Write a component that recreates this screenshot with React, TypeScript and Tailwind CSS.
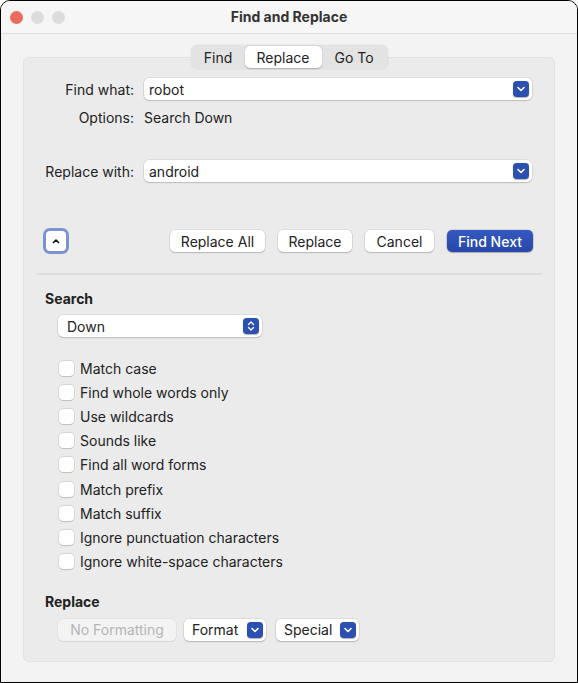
import React from "react";

const font = { fontFamily: "Inter, 'Liberation Sans', sans-serif" };

function BlueChevron() {
  return (
    <div className="w-[16px] h-[16px] rounded-[4px] bg-[#2c4fb2] flex items-center justify-center shadow-[0_0.5px_1px_rgba(0,0,0,0.3)]">
      <svg width="8" height="6" viewBox="0 0 8 6" fill="none">
        <path d="M1 1.5 L4 4.5 L7 1.5" stroke="white" strokeWidth="1.6" strokeLinecap="round" strokeLinejoin="round" />
      </svg>
    </div>
  );
}

function Stepper() {
  return (
    <div className="w-[16px] h-[16px] rounded-[4px] bg-[#2c4fb2] flex items-center justify-center shadow-[0_0.5px_1px_rgba(0,0,0,0.3)]">
      <svg width="8" height="12" viewBox="0 0 8 12" fill="none">
        <path d="M1.5 4.5 L4 2 L6.5 4.5" stroke="white" strokeWidth="1.4" strokeLinecap="round" strokeLinejoin="round" />
        <path d="M1.5 7.5 L4 10 L6.5 7.5" stroke="white" strokeWidth="1.4" strokeLinecap="round" strokeLinejoin="round" />
      </svg>
    </div>
  );
}

function Field({ value }: { value: string }) {
  return (
    <div className="h-[22px] flex-1 bg-white rounded-[5px] shadow-[0_0_0_0.5px_rgba(0,0,0,0.12),0_1px_1.5px_rgba(0,0,0,0.15)] flex items-center pl-[5px] pr-[3px]">
      <span className="flex-1 text-[14px] text-[#222]">{value}</span>
      <BlueChevron />
    </div>
  );
}

function Btn({ children, w }: { children: React.ReactNode; w: string }) {
  return (
    <div className={`${w} h-[22px] bg-white rounded-[5px] shadow-[0_0_0_0.5px_rgba(0,0,0,0.12),0_1px_1.5px_rgba(0,0,0,0.18)] flex items-center justify-center text-[14px] text-[#222]`}>
      {children}
    </div>
  );
}

const options = [
  "Match case",
  "Find whole words only",
  "Use wildcards",
  "Sounds like",
  "Find all word forms",
  "Match prefix",
  "Match suffix",
  "Ignore punctuation characters",
  "Ignore white-space characters",
];

export default function App() {
  return (
    <div style={font} className="w-[578px] h-[683px] border border-black rounded-t-[10px] overflow-hidden bg-[#f3f3f3] flex flex-col text-[#222]">
      {/* Title bar */}
      <div className="h-[33px] shrink-0 bg-[#f6f6f6] border-b border-[#dddddd] grid grid-cols-[1fr_auto_1fr] items-center">
        <div className="flex items-center gap-[8px] pl-[9px]">
          <div className="w-[13px] h-[13px] rounded-full bg-[#ec6a5e]" />
          <div className="w-[13px] h-[13px] rounded-full bg-[#dcdcdc]" />
          <div className="w-[13px] h-[13px] rounded-full bg-[#dcdcdc]" />
        </div>
        <div className="text-[14px] font-bold text-[#333] -mt-[1px]">Find and Replace</div>
        <div />
      </div>

      {/* Content */}
      <div className="flex-1 flex flex-col pt-[11px] pb-[20px] px-[22px]">
        <div className="relative z-10 self-center -mb-[12px] h-[24px] bg-[#e3e3e3] rounded-[6px] p-[1px] flex items-stretch shadow-[0_0_0_0.5px_rgba(0,0,0,0.06)] text-[14px] text-[#222]">
          <div className="w-[53px] flex items-center justify-center">Find</div>
          <div className="w-[77px] flex items-center justify-center bg-white rounded-[5px] shadow-[0_0.5px_1.5px_rgba(0,0,0,0.25)]">Replace</div>
          <div className="w-[65px] flex items-center justify-center">Go To</div>
        </div>

        <div className="flex-1 bg-[#ebebeb] rounded-[6px] border border-[#e2e2e2] flex flex-col pt-[20px] px-[12px]">
          {/* Find what */}
          <div className="flex items-center pr-[10px]">
            <div className="w-[108px] text-right pr-[10px] text-[14px]">Find what:</div>
            <Field value="robot" />
          </div>
          <div className="flex items-center mt-[8px] h-[18px]">
            <div className="w-[108px] text-right pr-[10px] text-[14px]">Options:</div>
            <div className="text-[14px]">Search Down</div>
          </div>
          <div className="flex items-center mt-[34px] pr-[10px]">
            <div className="w-[108px] text-right pr-[10px] text-[14px]">Replace with:</div>
            <Field value="android" />
          </div>

          {/* Buttons row */}
          <div className="flex items-center mt-[46px] pl-[7px] pr-[9px]">
            <div className="w-[26px] h-[26px] rounded-[7px] border-[3px] border-[#7b92d0] bg-white flex items-center justify-center">
              <svg width="8" height="6" viewBox="0 0 8 6" fill="none">
                <path d="M1.5 4.5 L4 2 L6.5 4.5" stroke="#111" strokeWidth="1.6" strokeLinecap="round" strokeLinejoin="round" />
              </svg>
            </div>
            <div className="flex-1" />
            <div className="flex items-center gap-[13px]">
              <Btn w="w-[95px]">Replace All</Btn>
              <Btn w="w-[74px]">Replace</Btn>
              <Btn w="w-[69px]">Cancel</Btn>
              <div className="w-[86px] h-[22px] rounded-[5px] bg-gradient-to-b from-[#3559c0] to-[#2647a8] shadow-[0_0_0_0.5px_rgba(0,0,0,0.2),0_1px_1.5px_rgba(0,0,0,0.2)] flex items-center justify-center text-[14px] font-medium text-white">
                Find Next
              </div>
            </div>
          </div>

          <div className="mt-[19px] h-[2px] bg-[#dedede]" />

          {/* Search */}
          <div className="mt-[13px] pl-[9px] text-[14px] font-bold text-[#222]">Search</div>
          <div className="mt-[6px] ml-[22px] w-[204px] h-[22px] bg-white rounded-[5px] shadow-[0_0_0_0.5px_rgba(0,0,0,0.12),0_1px_1.5px_rgba(0,0,0,0.15)] flex items-center pl-[9px] pr-[3px]">
            <span className="flex-1 text-[14px]">Down</span>
            <Stepper />
          </div>

          <div className="mt-[19px] ml-[22px] flex flex-col">
            {options.map((o) => (
              <div key={o} className="h-[24.2px] flex items-center gap-[6px]">
                <div className="ml-[1px] w-[15px] h-[15px] bg-white rounded-[4px] shadow-[0_0_0_0.5px_rgba(0,0,0,0.15),0_0.5px_1px_rgba(0,0,0,0.12)]" />
                <span className="text-[14px]">{o}</span>
              </div>
            ))}
          </div>

          {/* Replace */}
          <div className="mt-[17px] pl-[9px] text-[14px] font-bold text-[#222]">Replace</div>
          <div className="mt-[7px] ml-[22px] flex items-center gap-[8px]">
            <div className="w-[118px] h-[22px] rounded-[5px] bg-[#f3f3f3] shadow-[0_0_0_0.5px_rgba(0,0,0,0.06),0_1px_1px_rgba(0,0,0,0.06)] flex items-center justify-center text-[14px] text-[#b5b5b5]">
              No Formatting
            </div>
            <div className="w-[82px] h-[22px] bg-white rounded-[5px] shadow-[0_0_0_0.5px_rgba(0,0,0,0.12),0_1px_1.5px_rgba(0,0,0,0.18)] flex items-center pl-[8px] pr-[3px] text-[14px]">
              <span className="flex-1">Format</span>
              <BlueChevron />
            </div>
            <div className="w-[83px] h-[22px] ml-[2px] bg-white rounded-[5px] shadow-[0_0_0_0.5px_rgba(0,0,0,0.12),0_1px_1.5px_rgba(0,0,0,0.18)] flex items-center pl-[8px] pr-[3px] text-[14px]">
              <span className="flex-1">Special</span>
              <BlueChevron />
            </div>
          </div>
        </div>
      </div>
    </div>
  );
}
